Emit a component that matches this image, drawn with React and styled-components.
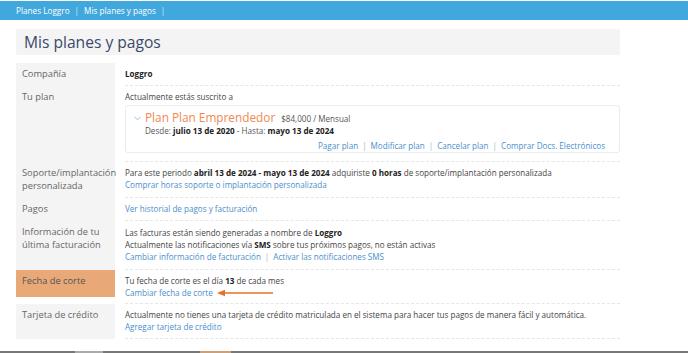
import React from 'react'
import styled, { createGlobalStyle } from "styled-components";

const Global = createGlobalStyle`
  html, body {
    margin: 0;
    padding: 0;
    background: #fff;
    font-family: "Open Sans", "Liberation Sans", sans-serif;
  }
  #root {
    min-height: 100vh;
    display: flex;
    flex-direction: column;
  }
`;

const TopBar = styled.div`
  height: 19px;
  margin-top: 1px;
  background: #41a8dd;
  display: flex;
  align-items: center;
  padding-left: 16px;
  font-size: 8.2px;
  color: #fff;
`;

const Crumb = styled.span`
  &::after {
    content: "|";
    margin: 0 5px 0 5px;
    color: #cfe8f6;
  }
`;

const Page = styled.div`
  flex: 1;
  width: 604px;
  margin-left: 16px;
`;

const TitleBox = styled.div`
  margin-top: 9px;
  height: 26px;
  background: #f4f4f4;
  border-radius: 2px;
  display: flex;
  align-items: center;
  padding-left: 8px;
  font-size: 15.6px;
  color: #3b4a6b;
`;

const Table = styled.div`
  margin-top: 8px;
  display: grid;
  grid-template-columns: 99px 1fr;
  column-gap: 10px;
  font-size: 8.1px;
  line-height: 12px;
  color: #444;
`;

const Label = styled.div`
  background: ${({ $hl }) => ($hl ? "#e8a878" : "#f4f4f4")};
  color: ${({ $hl }) => ($hl ? "#555" : "#666")};
  font-size: 9.3px;
  line-height: 13px;
  padding: 4px 6px 5px 6px;
  ${({ $hl }) => $hl && `
    align-self: start;
    padding-bottom: 10px;
  `}
`;

const Cell = styled.div`
  border-bottom: 1px dashed #e6e6e6;
  padding: ${({ $top }) => $top || 5}px 0 ${({ $bottom }) => $bottom || 5}px 0;
`;

const B = styled.b`
  color: #222;
  font-weight: 700;
`;

const Link = styled.a`
  color: #4a8fcb;
  text-decoration: none;
`;

const Sep = styled.span`
  color: #9bb8d3;
  margin: 0 4px;
`;

const PlanBox = styled.div`
  margin: 2px 0 3px 0;
  border: 1px solid #ececec;
  border-radius: 3px;
  padding: 3px 14px 0 8px;
`;

const PlanHead = styled.div`
  display: flex;
  align-items: baseline;
`;

const Chevron = styled.svg`
  width: 7px;
  height: 5px;
  margin-right: 4px;
  align-self: center;
  margin-top: 3px;
`;

const PlanName = styled.span`
  font-size: 11.8px;
  line-height: 16px;
  color: #f0894f;
  margin-right: 6px;
`;

const Price = styled.span`
  font-size: 8.1px;
  color: #555;
`;

const Dates = styled.div`
  padding-left: 11px;
  color: #555;
`;

const Actions = styled.div`
  text-align: right;
  margin-top: 3px;
`;

const ArrowRow = styled.div`
  display: flex;
  align-items: center;
  height: 11px;
`;

const Arrow = styled.svg`
  width: 60px;
  height: 8px;
  margin-left: 4px;
`;

const Footer = styled.div`
  height: 2px;
  background: #777;
  display: flex;
`;

const FooterSeg = styled.div`
  width: ${({ $w }) => $w}px;
  margin-left: ${({ $l }) => $l}px;
  background: ${({ $c }) => $c};
`;

export default function App() {
  return (
    <>
      <Global />
      <TopBar>
        <Crumb>Planes Loggro</Crumb>
        <Crumb>Mis planes y pagos</Crumb>
      </TopBar>
      <Page>
        <TitleBox>Mis planes y pagos</TitleBox>
        <Table>
          <Label>Compañía</Label>
          <Cell><B>Loggro</B></Cell>

          <Label>Tu plan</Label>
          <Cell>
            Actualmente estás suscrito a
            <PlanBox>
              <PlanHead>
                <Chevron viewBox="0 0 7 5">
                  <path d="M0.5 0.8 L3.5 3.8 L6.5 0.8" fill="none" stroke="#8fc1e6" strokeWidth="1" />
                </Chevron>
                <PlanName>Plan Plan Emprendedor</PlanName>
                <Price>$84,000 / Mensual</Price>
              </PlanHead>
              <Dates>
                Desde: <B>julio 13 de 2020</B> - Hasta: <B>mayo 13 de 2024</B>
              </Dates>
              <Actions>
                <Link>Pagar plan</Link><Sep>|</Sep>
                <Link>Modificar plan</Link><Sep>|</Sep>
                <Link>Cancelar plan</Link><Sep>|</Sep>
                <Link>Comprar Docs. Electrónicos</Link>
              </Actions>
            </PlanBox>
          </Cell>

          <Label>Soporte/implantación personalizada</Label>
          <Cell $bottom={6}>
            Para este periodo <B>abril 13 de 2024 - mayo 13 de 2024</B> adquiriste <B>0 horas</B> de soporte/implantación personalizada
            <br />
            <Link>Comprar horas soporte o implantación personalizada</Link>
          </Cell>

          <Label>Pagos</Label>
          <Cell><Link>Ver historial de pagos y facturación</Link></Cell>

          <Label>Información de tu última facturación</Label>
          <Cell $top={6} $bottom={6}>
            Las facturas están siendo generadas a nombre de <B>Loggro</B>
            <br />
            Actualmente las notificaciones vía <B>SMS</B> sobre tus próximos pagos, no están activas
            <br />
            <Link>Cambiar información de facturación</Link><Sep>|</Sep><Link>Activar las notificaciones SMS</Link>
          </Cell>

          <Label $hl>Fecha de corte</Label>
          <Cell>
            Tu fecha de corte es el día <B>13</B> de cada mes
            <ArrowRow>
              <Link>Cambiar fecha de corte</Link>
              <Arrow viewBox="0 0 60 8">
                <path d="M6 4 H56" stroke="#e8702a" strokeWidth="1.6" />
                <path d="M0 4 L8 0.8 L8 7.2 Z" fill="#e8702a" />
              </Arrow>
            </ArrowRow>
          </Cell>

          <Label>Tarjeta de crédito</Label>
          <Cell>
            Actualmente no tienes una tarjeta de crédito matriculada en el sistema para hacer tus pagos de manera fácil y automática.
            <br />
            <Link>Agregar tarjeta de crédito</Link>
          </Cell>
        </Table>
      </Page>
      <Footer>
        <FooterSeg $l={75} $w={28} $c="#aaa" />
        <FooterSeg $l={97} $w={31} $c="#c9a27c" />
      </Footer>
    </>
  );
}
